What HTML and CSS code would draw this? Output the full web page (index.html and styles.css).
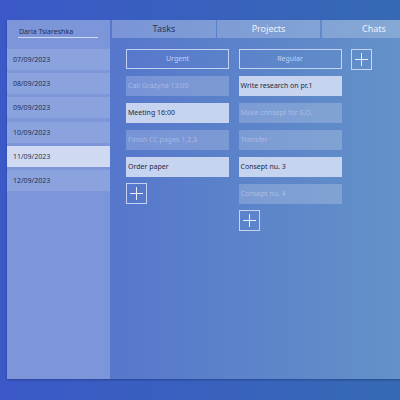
FILE: index.html
```html
<!DOCTYPE html>
<html>
<head>
<meta charset="utf-8">
<link rel="stylesheet" href="styles.css">
</head>
<body>
<div class="window">
  <aside class="sidebar">
    <div class="user"><span class="user-name">Daria Tsiareshka</span></div>
    <ul class="dates">
      <li class="date">07/09/2023</li>
      <li class="date">08/09/2023</li>
      <li class="date">09/09/2023</li>
      <li class="date">10/09/2023</li>
      <li class="date date-active">11/09/2023</li>
      <li class="date">12/09/2023</li>
    </ul>
  </aside>
  <main class="main">
    <nav class="tabs">
      <div class="tab tab-active">Tasks</div>
      <div class="tab">Projects</div>
      <div class="tab">Chats</div>
    </nav>
    <div class="board">
      <section class="column">
        <div class="column-title">Urgent</div>
        <div class="card card-dim">Call Grażyna 13:00</div>
        <div class="card">Meeting 16:00</div>
        <div class="card card-dim">Finish CC pages 1,2,3</div>
        <div class="card">Order paper</div>
        <button class="add"><svg width="13" height="13" viewBox="0 0 13 13"><path d="M6.5 0V13M0 6.5H13" stroke="#e8eefa" stroke-width="1"/></svg></button>
      </section>
      <section class="column">
        <div class="column-title">Regular</div>
        <div class="card">Write research on pr.1</div>
        <div class="card card-dim">Make consept for S.O.</div>
        <div class="card card-dim">Transfer</div>
        <div class="card">Consept nu. 3</div>
        <div class="card card-dim">Consept nu. 4</div>
        <button class="add"><svg width="13" height="13" viewBox="0 0 13 13"><path d="M6.5 0V13M0 6.5H13" stroke="#e8eefa" stroke-width="1"/></svg></button>
      </section>
      <button class="add"><svg width="13" height="13" viewBox="0 0 13 13"><path d="M6.5 0V13M0 6.5H13" stroke="#e8eefa" stroke-width="1"/></svg></button>
    </div>
  </main>
</div>
</body>
</html>
```
FILE: styles.css
```css
* { box-sizing: border-box; }
html, body { margin: 0; padding: 0; }
body {
  width: 400px;
  height: 400px;
  overflow: hidden;
  background: linear-gradient(to right, #3b59c8, #3669b4);
  font-family: "Noto Sans", sans-serif;
  padding: 20px 0 0 7px;
}
.window {
  display: flex;
  width: 393px;
  height: 359px;
  box-shadow: 0 1px 2px rgba(10, 20, 60, 0.35);
}
.sidebar {
  width: 103px;
  flex: none;
  background: #7d95d9;
  display: flex;
  flex-direction: column;
}
.user {
  height: 29px;
  padding: 7px 12px 0 11px;
}
.user-name {
  display: block;
  font-size: 7px;
  line-height: 9px;
  color: #22304f;
  padding: 0 0 1px 1px;
  border-bottom: 1px solid rgba(235, 242, 255, 0.75);
}
.dates {
  list-style: none;
  margin: 0;
  padding: 0;
}
.date {
  height: 21px;
  margin-bottom: 3.2px;
  background: #8aa2de;
  font-size: 7px;
  line-height: 21px;
  color: #25324f;
  padding-left: 6px;
}
.date-active {
  background: #cfdaf2;
}
.main {
  flex: 1;
  min-width: 0;
  overflow: hidden;
  background: linear-gradient(to right, #5677cc, #6391c8);
  display: flex;
  flex-direction: column;
}
.tabs {
  display: flex;
  gap: 1px;
  height: 18px;
  margin: 0 0 0 2px;
}
.tab {
  width: 104px;
  flex: none;
  background: rgba(255, 255, 255, 0.22);
  text-align: center;
  font-size: 9px;
  line-height: 18px;
  color: #eef2fb;
}
.tab:nth-child(2) { width: 103px; }
.tab:nth-child(3) { margin-left: 1px; }
.tab-active { color: #2a3758; }
.board {
  display: flex;
  align-items: flex-start;
  gap: 9.5px;
  padding: 11px 0 0 16px;
}
.column {
  width: 103px;
  display: flex;
  flex-direction: column;
  gap: 7px;
}
.column-title {
  height: 20px;
  border: 1px solid rgba(230, 238, 255, 0.75);
  text-align: center;
  font-size: 7px;
  line-height: 18px;
  color: #c4d2f0;
}
.card {
  height: 20px;
  background: #c7d4ef;
  font-size: 7px;
  line-height: 20px;
  color: #1d2942;
  padding-left: 2px;
  white-space: nowrap;
}
.card-dim {
  background: rgba(255, 255, 255, 0.2);
  color: rgba(200, 212, 240, 0.6);
}
.column .add { margin-top: -1px; }
.add {
  width: 21px;
  height: 21px;
  padding: 0;
  margin: 0;
  background: transparent;
  border: 1px solid rgba(230, 238, 255, 0.75);
  display: flex;
  align-items: center;
  justify-content: center;
}
.add svg { display: block; }
```
